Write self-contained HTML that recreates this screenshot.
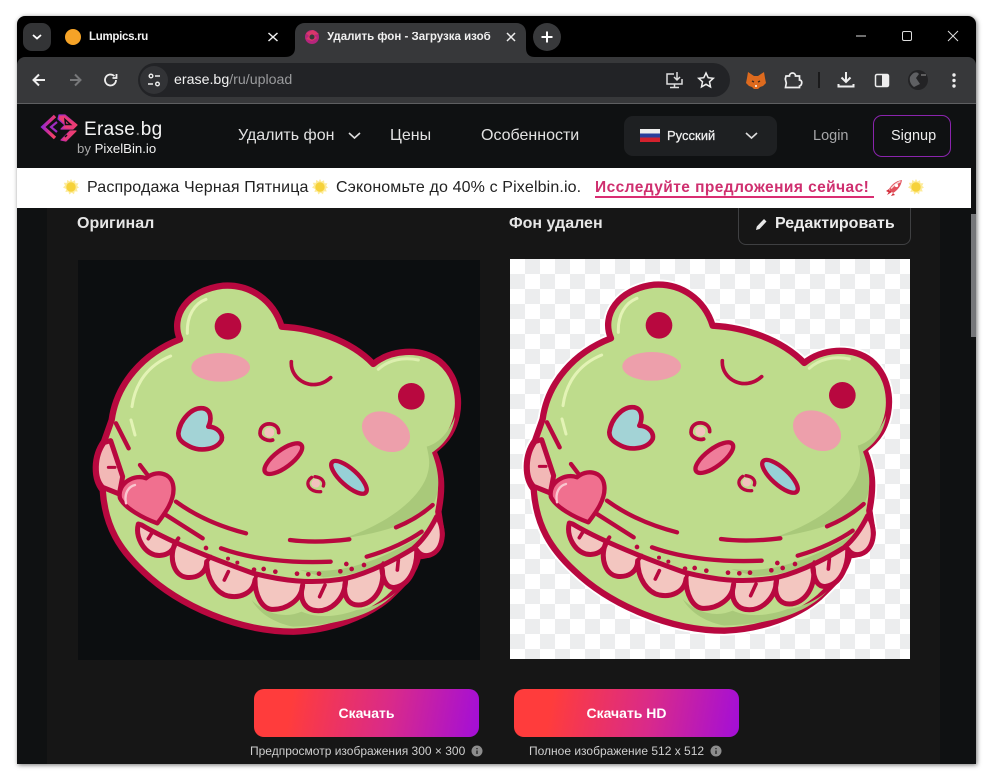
<!DOCTYPE html>
<html lang="ru"><head><meta charset="utf-8"><title>Erase.bg</title>
<style>
html,body{margin:0;padding:0;width:993px;height:780px;overflow:hidden;background:#fff;font-family:"Liberation Sans","Noto Sans CJK JP",sans-serif}
.a{position:absolute}
.t{position:absolute;white-space:nowrap;line-height:1}
svg{position:absolute;overflow:visible}
#win{position:absolute;left:17px;top:16px;width:959px;height:748px;background:#000;border-radius:8px 8px 0 0;box-shadow:1px 1px 5px rgba(0,0,0,.55)}
</style></head><body>
<div id="win"></div>
<!-- toolbar -->
<div class="a" style="left:17px;top:57px;width:959px;height:46px;background:#37383a;border-radius:8px 8px 0 0"></div>
<div class="a" style="left:17px;top:103px;width:959px;height:1px;background:#5e5f61"></div>
<div class="a" style="left:23px;top:23px;width:28px;height:28px;border-radius:9px;background:#333436"></div>
<svg style="left:0;top:0" width="993" height="104" fill="none">
<path d="M33 35l4 3.500 4-3.500" stroke="#fff" stroke-width="1.800"/>
<path d="M285 57c6 0 10-3 10-9V33c0-6 4-10 10-10h211c6 0 10 4 10 10v15c0 6 3 9 9 9z" fill="#37383a"/>
<circle cx="73" cy="37" r="8" fill="#f5a327"/>
<path d="M268.500 33l9 8m0-8l-9 8M507 33l8 8m0-8l-8 8" stroke="#eee" stroke-width="1.500"/>
<circle cx="547" cy="37" r="14" fill="#38393b"/>
<path d="M547 31.500v11M541.500 37h11" stroke="#fff" stroke-width="2"/>
<path d="M856 36h10" stroke="#ddd" stroke-width="1"/>
<rect x="902.500" y="31.500" width="9" height="9" rx="1.500" stroke="#ddd" stroke-width="1"/>
<path d="M948 31l10 10m0-10l-10 10" stroke="#ddd" stroke-width="1"/>
<path d="M45 80H34m5-5.500L33.500 80l5.500 5.500" stroke="#eee" stroke-width="2"/>
<path d="M81 80H70m5-5.500L80.500 80 75 85.500" stroke="#77787a" stroke-width="2"/>
<path d="M116 80a5.500 5.500 0 1 1-1.600-3.900M116.500 74v4h-4" stroke="#eee" stroke-width="1.800"/>
<rect x="138" y="63" width="592" height="34" rx="17" fill="#222326"/>
<circle cx="154" cy="80" r="14" fill="#323336"/>
<g stroke="#eee" stroke-width="1.400"><circle cx="151" cy="76" r="1.800"/><path d="M155 76h5M148 84h5"/><circle cx="157.500" cy="84" r="1.800"/></g>
<g stroke="#ddd" stroke-width="1.500"><path d="M674 74h-7v10h15v-5M670 87.500h9M674.500 84v3"/><path d="M677 72v8m-3-3 3 3 3-3"/></g>
<path d="M706 73l2.200 4.700 5.100.6-3.800 3.500 1 5.100-4.500-2.600-4.500 2.600 1-5.100-3.800-3.500 5.100-.6z" stroke="#eee" stroke-width="1.500"/>
<path d="M748 72l6 4h4l6-4 1 6 1 5-3 3-3 1-2 2h-4l-2-2-3-1-3-3 1-5z" fill="#dd6a1e"/><path d="M752 81l2 1m6-1l-2 1" stroke="#3a2a20" stroke-width="1.500"/><path d="M755 86h2" stroke="#fff" stroke-width="1.500"/>
<path d="M786 76h3.500c0-4 6-4 6 0h4v4c3 0 3 5 0 6v1.500h-14l.8-4.500-1-4z" stroke="#eee" stroke-width="1.700"/>
<path d="M819 72v16" stroke="#111" stroke-width="1.500"/>
<path d="M846 72v10m-4.500-4.500 4.500 4.500 4.500-4.500M838.500 84v2.500h15V84" stroke="#eee" stroke-width="2"/>
<rect x="875.500" y="74.500" width="13" height="12" rx="1.500" stroke="#eee" stroke-width="1.500"/><rect x="882" y="74.500" width="6.500" height="12" fill="#eee"/>
<circle cx="918" cy="80" r="10" fill="#232325"/><path d="M910 77c3-5 7-6 9-3l-3 4 4 6-6 3c-3-2-5-6-4-10z" fill="#5f6063"/><path d="M921 75h5" stroke="#999"/>
<g fill="#eee"><circle cx="954" cy="75" r="1.700"/><circle cx="954" cy="80.500" r="1.700"/><circle cx="954" cy="86" r="1.700"/></g>
<circle cx="312" cy="37" r="7" fill="#b5257c"/><path d="M306 33l7-3 6 4-5 1 3 3-5 3-6-2 3-3z" fill="#d8376a"/><circle cx="312" cy="37" r="2.500" fill="#37383a"/>
</svg>
<div class="t" style="left:89px;top:32px;font-size:11.500px;font-weight:700;color:#f2f2f2;letter-spacing:-.3px">Lumpics.ru</div>
<div class="t" style="left:327px;top:32px;width:164px;overflow:hidden;font-size:11.500px;font-weight:700;color:#f0f0f0">Удалить фон - Загрузка изображения</div>
<div class="t" style="left:174px;top:73px;font-size:14.200px;color:#9a9b9d"><span style="color:#f2f2f2">erase.bg</span>/ru/upload</div>

<!-- page -->
<div class="a" style="left:17px;top:104px;width:954px;height:660px;background:#0f1112"></div>
<div class="a" style="left:47px;top:207px;width:893px;height:557px;background:#161616"></div>
<div class="a" style="left:971px;top:104px;width:5px;height:660px;background:#101112"></div>
<div class="a" style="left:971px;top:214px;width:5px;height:123px;background:#76777a"></div>
<!-- nav -->
<svg style="left:40px;top:113px" width="38" height="32" viewBox="0 0 38 32" fill="none">
<defs><linearGradient id="lg" x1="0" y1="0" x2="1" y2=".3"><stop offset="0" stop-color="#8a2bd8"/><stop offset=".5" stop-color="#c72b9e"/><stop offset="1" stop-color="#f0406a"/></linearGradient></defs>
<path d="M15 3L3 14l12 11" stroke="url(#lg)" stroke-width="3.400"/>
<path d="M17 9l-6 5 6 5" stroke="#a02cc0" stroke-width="2.200"/>
<path d="M19 2h6l12 10-4 4H21l4-4-7-6zM21 27l9-9h6l-10 10z" fill="#ea3c76" stroke="url(#lg)" stroke-width="1.200" stroke-linejoin="round"/>
<path d="M25 6.500l5.500 5h-5zM27 22l-2 2" stroke="#0f1112" stroke-width="1.500"/>
</svg>
<div class="t" style="left:84px;top:120px;font-size:19px;color:#f4f4f4;letter-spacing:.3px">Erase<span style="color:#888">.</span>bg</div>
<div class="t" style="left:77px;top:142px;font-size:13.200px;color:#aaa">by <span style="color:#f0f0f0">PixelBin.io</span></div>
<div class="t" style="left:238px;top:128px;font-size:16px;color:#e2e2e2">Удалить фон</div>
<svg style="left:348px;top:132px" width="14" height="8" fill="none"><path d="M1 1l5.500 5L12 1" stroke="#ddd" stroke-width="1.600"/></svg>
<div class="t" style="left:390px;top:128px;font-size:16px;color:#e2e2e2">Цены</div>
<div class="t" style="left:481px;top:128px;font-size:16px;color:#e2e2e2">Особенности</div>
<div class="a" style="left:624px;top:116px;width:153px;height:40px;background:#1e2022;border-radius:9px"></div>
<div class="a" style="left:640px;top:129px;width:20px;height:13px;background:linear-gradient(#eee 0 33%,#2b3f9b 33% 66%,#d3212d 66%)"></div>
<div class="t" style="left:667px;top:129px;font-size:13px;color:#f0f0f0;-webkit-text-stroke:.25px #f0f0f0">Русский</div>
<svg style="left:745px;top:132px" width="14" height="8" fill="none"><path d="M1 1l5.500 5L12 1" stroke="#ddd" stroke-width="1.600"/></svg>
<div class="t" style="left:813px;top:129px;font-size:14.500px;color:#a6a7a9">Login</div>
<div class="a" style="left:873px;top:115px;width:76px;height:40px;border:1px solid #8a24ad;border-radius:9px"></div>
<div class="t" style="left:891px;top:129px;font-size:14.500px;color:#eee">Signup</div>
<!-- edit button, tucked under the banner -->
<div class="a" style="left:738px;top:200px;width:171px;height:43px;border:1px solid #3f4042;border-radius:8px"></div>
<svg style="left:755px;top:217px" width="13" height="14" fill="none"><path d="M1 13l.8-3.500L9 2l2.500 2.500L4.500 12z" fill="#e8e8e8"/></svg>
<div class="t" style="left:775px;top:216px;font-size:16px;font-weight:700;color:#ececec">Редактировать</div>
<!-- banner -->
<div class="a" style="left:17px;top:168px;width:954px;height:40px;background:#fff"></div>
<svg width="0" height="0" style="left:0;top:0"><defs>
<g id="sun"><path d="M8 0l1.400 2.600L12 1.300l.4 3 3-.1-1.200 2.700L16 8.500l-2.300 1.200 1 2.800-3 -.1-.7 2.900-2.400-1.700-2.300 1.900-.9-2.900-3 .4.900-2.900L0 8.500l2-2L.8 3.700l3 .2.500-3 2.400 1.600z" fill="#fdeb9a"/><circle cx="8" cy="8" r="4.700" fill="#f6d23a"/></g>
</defs></svg>
<svg style="left:63px;top:179px" width="16" height="16"><use href="#sun"/></svg>
<svg style="left:312px;top:179px" width="16" height="16"><use href="#sun"/></svg>
<svg style="left:908px;top:179px" width="16" height="16"><use href="#sun"/></svg>
<div class="t" style="left:87px;top:180px;font-size:16px;color:#222;letter-spacing:.14px">Распродажа Черная Пятница</div>
<div class="t" style="left:336px;top:180px;font-size:16px;color:#222;letter-spacing:.13px">Сэкономьте до 40% с Pixelbin.io.</div>
<div class="t" style="left:595px;top:180px;font-size:15.500px;font-weight:700;color:#cf2f6f;letter-spacing:.43px">Исследуйте предложения сейчас!</div>
<div class="a" style="left:595px;top:196px;width:279px;height:2px;background:#d92d72"></div>
<svg style="left:886px;top:179px" width="17" height="17" fill="none"><path d="M3 10C6 5 10 2 16 1c-1 6-4 10-9 13z" fill="#e2505c"/><path d="M5 9.500C8 6 11 4 14.500 2.500" stroke="#f7d5d5" stroke-width="1.500"/><path d="M3 10L0 12l4 2zM7 14l-2 3 4-1zM4 11l-3 5 5-3z" fill="#d32f3c"/><circle cx="10.500" cy="6.500" r="1.600" fill="#fff"/></svg>
<!-- headings -->
<div class="t" style="left:77px;top:216px;font-size:16px;font-weight:700;color:#e6e6e6">Оригинал</div>
<div class="t" style="left:509px;top:216px;font-size:16px;font-weight:700;color:#e6e6e6">Фон удален</div>

<!-- images -->
<div class="a" style="left:78px;top:260px;width:402px;height:400px;background:#0c0e10"></div>
<div class="a" style="left:510px;top:259px;width:400px;height:400px;background-color:#fff;background-image:conic-gradient(#ecedee 25%,#fff 0 50%,#ecedee 0 75%,#fff 0);background-size:30px 30px"></div>
<svg width="0" height="0" style="left:0;top:0"><defs>
<path id="sil" d="M300 208C270 140 320 60 430 47C510 42 580 90 605 170C700 175 810 210 880 282C930 240 1020 230 1080 275C1140 325 1150 420 1110 490C1095 515 1075 530 1060 543C1085 600 1090 650 1075 725L1085 790C1085 830 1050 860 1015 858C1000 920 960 950 925 985C860 1040 750 1082 640 1085C480 1085 300 1010 190 905C120 840 75 770 68 660C40 625 40 560 72 515L95 450C110 340 190 250 300 208Z"/>
<g id="frog" stroke-linecap="round" stroke-linejoin="round" fill="none">
<use href="#sil" fill="#bedc8c" stroke="#b8083f" stroke-width="19"/>
<!-- shade -->
<path d="M1056 548C1080 610 1080 660 1062 700C1010 760 900 790 790 805C900 770 1010 700 1040 620C1050 590 1050 570 1040 530C1080 520 1110 480 1125 440C1120 490 1090 525 1056 548Z" fill="#a9c97a"/>
<path d="M660 900C760 910 860 895 1020 800L1000 835C930 880 850 915 730 922Z" fill="#a9c97a"/>
<path d="M515 990C560 1035 620 1045 665 1025C720 1050 790 1035 830 1020C880 1015 930 985 950 965C880 1040 770 1065 640 1070C590 1060 540 1035 515 990Z" fill="#a9c97a"/>
<!-- left frill -->
<path d="M72 518C42 560 42 625 68 652L118 672L128 620L92 512Z" fill="#f2b8b6" stroke="#b8083f" stroke-width="15"/>
<path d="M85 592l20 0" stroke="#b8083f" stroke-width="9"/>
<!-- frill -->
<path d="M185 765C260 810 380 860 520 910C600 930 690 945 800 925C880 905 960 860 1000 835C1030 810 1055 770 1070 740C1095 770 1095 840 1050 855C1035 860 1020 855 1010 840C1012 890 990 945 945 952C925 955 908 940 905 890C920 950 880 1005 835 1005C810 1005 785 985 797 930C795 990 750 1025 710 1022C680 1020 655 995 668 945C665 990 620 1020 575 1018C545 1015 525 975 525 930C520 970 480 985 445 978C410 970 380 930 380 875C380 910 350 925 320 922C285 918 265 870 285 820C280 850 250 860 225 855C190 845 165 800 175 762Z" fill="#f3c6c0" stroke="#b8083f" stroke-width="15"/>
<path d="M285 820L295 805M380 875L392 860M525 930L530 912M668 945L670 935M797 930L800 925M905 890L910 880" stroke="#b8083f" stroke-width="12"/>
<path d="M215 790l-10 16M445 905l-12 25M735 945l-16 35M955 870l-3 30" stroke="#b8083f" stroke-width="11"/>
<!-- highlights -->
<path d="M322 190C320 135 345 100 378 88" stroke="#e3f3b5" stroke-width="9"/>
<path d="M156 410C165 340 205 285 272 258" stroke="#e3f3b5" stroke-width="9"/>
<path d="M153 450L165 495" stroke="#e3f3b5" stroke-width="9"/>
<path d="M895 298C925 270 970 260 1015 270" stroke="#dcefae" stroke-width="9"/>
<!-- eyes -->
<circle cx="444" cy="169" r="40" fill="#b8083f"/><circle cx="994" cy="379" r="40" fill="#b8083f"/>
<!-- cheeks -->
<ellipse cx="422" cy="292" rx="88" ry="43" fill="#ed9fab"/>
<ellipse cx="918" cy="485" rx="76" ry="56" transform="rotate(28 918 485)" fill="#ed9fab"/>
<!-- wink -->
<path d="M634 275C630 330 700 370 752 323" stroke="#b8083f" stroke-width="11"/>
<!-- blue heart -->
<path d="M295 490C300 450 335 410 370 415C395 420 395 450 385 470C410 470 430 490 425 510C410 540 360 545 330 530C310 520 295 510 295 490Z" fill="#a3d3d6" stroke="#b8083f" stroke-width="14"/>
<!-- nose -->
<circle cx="568" cy="487" r="15" fill="#f2c2bd"/>
<path d="M596 488C598 455 540 450 540 490C540 505 565 515 578 510" stroke="#b8083f" stroke-width="11"/>
<circle cx="707" cy="640" r="13" fill="#f2c2bd"/>
<path d="M695 622C670 640 690 668 722 665M705 620C725 622 735 635 730 648" stroke="#b8083f" stroke-width="10"/>
<!-- mouth slits -->
<ellipse cx="610" cy="566" rx="68" ry="26" transform="rotate(-37 610 566)" fill="#ef7d9a" stroke="#b8083f" stroke-width="13"/>
<ellipse cx="807" cy="622" rx="68" ry="25" transform="rotate(42 807 622)" fill="#97d0d6" stroke="#b8083f" stroke-width="13"/>
<!-- lines -->
<g stroke="#b8083f" stroke-width="13">
<path d="M108 460L146 535M180 585L205 618"/>
<path d="M288 695C350 740 420 770 498 790"/>
<path d="M258 735L368 805"/>
<path d="M630 810C690 818 750 815 808 808"/>
<path d="M423 835C520 870 640 880 752 875"/>
<path d="M860 860C930 840 990 810 1025 785"/>
<path d="M948 772C990 755 1030 730 1058 705"/>
</g>
<g fill="#b8083f"><circle cx="378" cy="834" r="7"/><circle cx="444" cy="866" r="6"/><circle cx="472" cy="878" r="6"/><circle cx="522" cy="899" r="7"/><circle cx="551" cy="897" r="7"/><circle cx="586" cy="905" r="7"/><circle cx="651" cy="911" r="7"/><circle cx="685" cy="913" r="7"/><circle cx="717" cy="911" r="7"/><circle cx="781" cy="904" r="7"/><circle cx="799" cy="882" r="7"/><circle cx="815" cy="897" r="7"/><circle cx="852" cy="885" r="7"/></g>
<!-- pink heart -->
<path d="M198 625C225 600 275 605 280 650C285 690 255 730 232 760C190 745 135 715 120 685C110 640 165 610 198 625Z" fill="#f0708f" stroke="#b8083f" stroke-width="13"/>
<path d="M138 700C132 670 145 650 165 645" stroke="#f9c7d0" stroke-width="7"/>
</g>
</defs></svg>
<svg style="left:80px;top:270px" width="400" height="380" viewBox="0 0 1200 1140"><use href="#frog"/></svg>
<svg style="left:511px;top:269px" width="400" height="380" viewBox="0 0 1200 1140">
<use href="#sil" fill="#fff" stroke="#fff" stroke-width="30" stroke-linejoin="round"/><use href="#frog"/></svg>

<!-- buttons -->
<div class="a" style="left:254px;top:689px;width:225px;height:48px;border-radius:10px;background:linear-gradient(100deg,#ff3c3c 17%,#d92a8a 60%,#a30ed8 100%)"></div>
<div class="a" style="left:514px;top:689px;width:225px;height:48px;border-radius:10px;background:linear-gradient(100deg,#ff3c3c 17%,#d92a8a 60%,#a30ed8 100%)"></div>
<div class="t" style="left:254px;top:706px;width:225px;text-align:center;font-size:14px;font-weight:700;color:#fff">Скачать</div>
<div class="t" style="left:514px;top:706px;width:225px;text-align:center;font-size:14px;font-weight:700;color:#fff">Скачать HD</div>
<div class="t" style="left:250px;top:745px;font-size:12px;color:#cfcfcf">Предпросмотр изображения 300 × 300</div>
<div class="t" style="left:529px;top:745px;font-size:12px;color:#cfcfcf">Полное изображение 512 x 512</div>
<svg style="left:471px;top:745px" width="12" height="12"><circle cx="6" cy="6" r="5.500" fill="#8d8d8d"/><path d="M6 5.500v3.500M6 3v1.200" stroke="#222" stroke-width="1.300"/></svg>
<svg style="left:710px;top:745px" width="12" height="12"><circle cx="6" cy="6" r="5.500" fill="#8d8d8d"/><path d="M6 5.500v3.500M6 3v1.200" stroke="#222" stroke-width="1.300"/></svg>
</body></html>
